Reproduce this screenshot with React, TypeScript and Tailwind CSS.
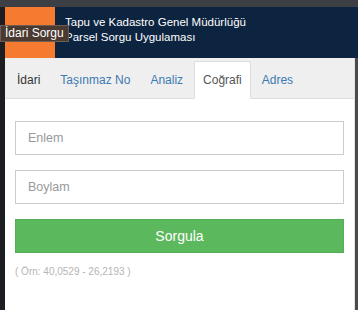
import React from "react";

const font = { fontFamily: '"Liberation Sans", Arial, sans-serif' };

export default function App() {
  const tabs = ["İdari", "Taşınmaz No", "Analiz", "Coğrafi", "Adres"];
  return (
    <div
      className="relative w-[358px] h-[310px] overflow-hidden bg-[#3a3d41] flex flex-col"
      style={font}
    >
      <div className="h-[7px] shrink-0 bg-[#3c3f43]" />
      <div className="flex flex-1 min-h-0">
        <div className="w-[5px] shrink-0 bg-[#1c1e22]" />
        <div className="flex flex-col flex-1 min-w-0">
          <div className="h-[51px] shrink-0 flex bg-[#0c2440]">
            <div className="w-[50px] bg-[#f47b30]" />
            <div className="flex flex-col pl-[10px] pt-[8px] text-[11.5px] leading-[15px] text-white">
              <span>Tapu ve Kadastro Genel Müdürlüğü</span>
              <span>Parsel Sorgu Uygulaması</span>
            </div>
          </div>
          <div className="flex flex-1 min-h-0">
            <div className="w-[349px] shrink-0 bg-white flex flex-col">
              <div className="h-[41px] shrink-0 flex items-end pl-[3px] bg-[#efefef] border-b border-[#dddddd]">
                {tabs.map((t, i) => (
                  <div
                    key={t}
                    className={
                      i === 3
                        ? "h-[38px] -mb-px mr-[2px] px-[8px] flex items-center text-[12px] text-[#555555] bg-white border border-[#dddddd] border-b-white"
                        : i === 0
                        ? "h-[38px] -mb-px mr-[2px] px-[8px] flex items-center text-[12px] text-[#333333] border border-transparent"
                        : "h-[38px] -mb-px mr-[2px] px-[8px] flex items-center text-[12px] text-[#3d7ab3] border border-transparent"
                    }
                  >
                    {t}
                  </div>
                ))}
              </div>
              <div className="flex flex-col px-[10px] pt-[22px]">
                <div className="h-[34px] mb-[15px] border border-[#cccccc] flex items-center pl-[12px] text-[12.5px] text-[#999999]">
                  Enlem
                </div>
                <div className="h-[34px] mb-[15px] border border-[#cccccc] flex items-center pl-[12px] text-[12.5px] text-[#999999]">
                  Boylam
                </div>
                <div className="h-[34px] bg-[#5cb85c] border border-[#55b055] flex items-center justify-center text-[14px] text-white">
                  Sorgula
                </div>
                <div className="mt-[12px] text-[10px] leading-[14px] text-[#b5b5b5]">
                  ( Örn: 40,0529 - 26,2193 )
                </div>
              </div>
            </div>
            <div className="w-[1px] shrink-0 bg-[#e2e2e2]" />
            <div className="flex-1 bg-[#4a4b4d]" />
          </div>
        </div>
      </div>
      <div className="absolute left-0 top-[25px] h-[17px] px-[4px] flex items-center bg-[#4a3a31] border border-[#6e5d52] text-[12px] leading-[15px] text-white">
        İdari Sorgu
      </div>
    </div>
  );
}
